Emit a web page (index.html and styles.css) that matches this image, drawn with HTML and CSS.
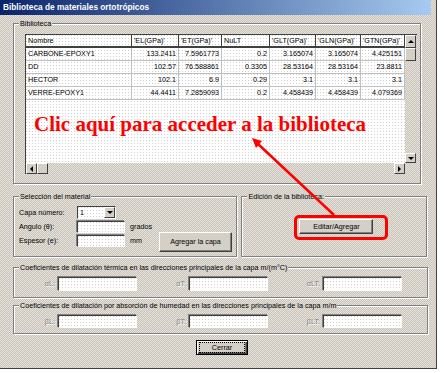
FILE: index.html
```html
<!DOCTYPE html>
<html lang="es">

<head>
  <meta charset="UTF-8">
  <title>Biblioteca de materiales ortotrópicos</title>
  <link rel="stylesheet" href="styles.css">
</head>

<body>
  <div class="window">
    <div class="titlebar">Biblioteca de materiales ortotrópicos</div>
    <div class="client">

      <div class="group lib">
        <span class="group-label">Biblioteca</span>
        <div class="grid">
          <div class="grid-body">
            <div class="grid-row head">
              <div class="cell">Nombre</div>
              <div class="cell">'EL(GPa)'</div>
              <div class="cell">'ET(GPa)'</div>
              <div class="cell">NuLT</div>
              <div class="cell">'GLT(GPa)'</div>
              <div class="cell">'GLN(GPa)'</div>
              <div class="cell">'GTN(GPa)'</div>
            </div>
            <div class="grid-row">
              <div class="cell">CARBONE-EPOXY1</div>
              <div class="cell num">133.2411</div>
              <div class="cell num">7.5961773</div>
              <div class="cell num">0.2</div>
              <div class="cell num">3.165074</div>
              <div class="cell num">3.165074</div>
              <div class="cell num">4.425151</div>
            </div>
            <div class="grid-row">
              <div class="cell">DD</div>
              <div class="cell num">102.57</div>
              <div class="cell num">76.588861</div>
              <div class="cell num">0.3305</div>
              <div class="cell num">28.53164</div>
              <div class="cell num">28.53164</div>
              <div class="cell num">23.8811</div>
            </div>
            <div class="grid-row">
              <div class="cell">HECTOR</div>
              <div class="cell num">102.1</div>
              <div class="cell num">6.9</div>
              <div class="cell num">0.29</div>
              <div class="cell num">3.1</div>
              <div class="cell num">3.1</div>
              <div class="cell num">3.1</div>
            </div>
            <div class="grid-row">
              <div class="cell">VERRE-EPOXY1</div>
              <div class="cell num">44.4411</div>
              <div class="cell num">7.2859093</div>
              <div class="cell num">0.2</div>
              <div class="cell num">4.458439</div>
              <div class="cell num">4.458439</div>
              <div class="cell num">4.079369</div>
            </div>
            <div class="callout">Clic aquí para acceder a la biblioteca</div>
          </div>
          <div class="vscroll">
            <span class="sb-btn sb-up"><i class="tri tri-up"></i></span>
            <span class="sb-btn sb-vthumb"></span>
            <span class="sb-track"></span>
            <span class="sb-btn sb-down"><i class="tri tri-down"></i></span>
          </div>
          <div class="hscroll">
            <span class="sb-btn sb-side"><i class="tri tri-left"></i></span>
            <span class="sb-btn sb-side"></span>
            <span class="sb-track"></span>
            <span class="sb-btn sb-side"><i class="tri tri-right"></i></span>
          </div>
          <div class="corner"></div>
        </div>
      </div>

      <div class="row">
        <div class="group sel">
          <span class="group-label">Selección del material</span>
          <div class="form-row first">
            <span class="fld-label">Capa número:</span>
            <div class="combo">
              <span class="combo-value">1</span>
              <span class="combo-btn"><i class="tri tri-down"></i></span>
            </div>
          </div>
          <div class="form-row">
            <span class="fld-label">Angulo (θ):</span>
            <span class="txt"></span>
            <span class="unit">grados</span>
          </div>
          <div class="form-row">
            <span class="fld-label">Espesor (e):</span>
            <span class="txt"></span>
            <span class="unit">mm</span>
            <button class="btn agregar">Agregar la capa</button>
          </div>
        </div>

        <div class="group edit">
          <span class="group-label">Edición de la biblioteca:</span>
          <div class="highlight">
            <button class="btn editar">Editar/Agregar</button>
          </div>
        </div>
      </div>

      <div class="group coef">
        <span class="group-label">Coeficientes de dilatación térmica en las direcciones principales de la capa m/(m°C)</span>
        <span class="coef-label w1">αL:</span><span class="coef-input"></span>
        <span class="coef-label w2">αT:</span><span class="coef-input"></span>
        <span class="coef-label w3">αLT:</span><span class="coef-input"></span>
      </div>

      <div class="group coef hum">
        <span class="group-label">Coeficientes de dilatación por absorción de humedad en las direcciones principales de la capa m/m</span>
        <span class="coef-label w1">βL:</span><span class="coef-input"></span>
        <span class="coef-label w2">βT:</span><span class="coef-input"></span>
        <span class="coef-label w3">βLT:</span><span class="coef-input"></span>
      </div>

      <div class="footer">
        <button class="btn cerrar"><span class="focus">Cerrar</span></button>
      </div>
    </div>

    <svg class="arrow" width="437" height="369" viewBox="0 0 437 369">
      <line x1="334" y1="215" x2="258" y2="144" stroke="#f00" stroke-width="2.5" />
      <polygon points="252,138 262,141 256,148" fill="#f00" />
    </svg>
  </div>
</body>

</html>
```

FILE: styles.css
```css
body {
  margin: 0;
  background: #fff;
  font-family: "Liberation Sans", Arial, sans-serif;
  font-size: 7.2px;
  color: #000;
}

.window,
.group-label,
.sb-track,
.corner {
  background: repeating-conic-gradient(#c8c4bc 0 25%, #e6e2da 0 50%) 0 0 / 2px 2px fixed;
}

.grid-body,
.txt,
.coef-input,
.combo-value {
  background: conic-gradient(at 1px 1px, #fff 75%, #d0d0d0 0) 0 0 / 3px 3px;
}

.window {
  position: relative;
  width: 437px;
  height: 369px;
  box-sizing: border-box;
  border-right: 1px solid #404040;
  border-bottom: 1px solid #404040;
  padding-right: 5px;
}

.titlebar {
  height: 15px;
  line-height: 15px;
  padding-left: 3px;
  background: linear-gradient(to right, #0a246a, #a6caf0);
  color: #fff;
  font-weight: bold;
  font-size: 8.3px;
}

.client {
  padding: 0 4px 0 13px;
}

/* etched frame */
.group {
  position: relative;
  box-sizing: border-box;
  border: 1px solid #808080;
  box-shadow: 1px 1px 0 #fff, inset 1px 1px 0 #fff;
}

.group-label {
  position: absolute;
  top: -5px;
  left: 5px;
  padding: 0 1px;
  line-height: 9px;
  white-space: nowrap;
}

.lib {
  margin-top: 8px;
  width: 408px;
  height: 161px;
  padding: 10px 0 0 11px;
}

.grid {
  display: grid;
  grid-template-columns: 379px 11px;
  grid-template-rows: 128px 11px;
  width: 391px;
  border-top: 1px solid #404040;
  border-left: 1px solid #404040;
}

.grid-body {
  position: relative;
  overflow: hidden;
}

.grid-row {
  display: grid;
  grid-template-columns: 106px 47px 43px 48px 46px 45px 44px;
}

.cell {
  height: 13px;
  box-sizing: border-box;
  border-right: 1px solid #c0c0c0;
  border-bottom: 1px solid #c0c0c0;
  padding: 0 2px;
  line-height: 12px;
  white-space: nowrap;
  overflow: hidden;
}

.head .cell {
  border-right-color: #404040;
  border-bottom: 2px solid #404040;
  line-height: 11px;
}

.num {
  text-align: right;
}

.callout {
  position: absolute;
  left: 8px;
  top: 79px;
  font: bold 21px/21px "Liberation Serif", "Times New Roman", serif;
  color: #f00;
  white-space: nowrap;
}

/* scrollbars */
.vscroll {
  display: flex;
  flex-direction: column;
}

.hscroll {
  display: flex;
}

.sb-track {
  flex: 1;
}

.sb-btn,
.combo-btn {
  display: flex;
  align-items: center;
  justify-content: center;
  box-sizing: border-box;
  background: #d4d0c8;
  border: 1px solid;
  border-color: #fff #404040 #404040 #fff;
}

.sb-up,
.sb-vthumb {
  height: 13px;
}

.sb-down {
  height: 10px;
}

.sb-side {
  width: 11px;
}

.tri {
  width: 0;
  height: 0;
  border: 3px solid transparent;
}

.tri-up {
  border-top: 0;
  border-bottom-color: #000;
}

.tri-down {
  border-bottom: 0;
  border-top-color: #000;
}

.tri-left {
  border-left: 0;
  border-right-color: #000;
}

.tri-right {
  border-right: 0;
  border-left-color: #000;
}

/* second row */
.row {
  display: flex;
  gap: 4px;
  margin-top: 12px;
}

.sel {
  width: 225px;
  height: 61px;
  padding: 9px 0 0 5px;
}

.edit {
  width: 186px;
  height: 61px;
  padding: 18px 0 0 52px;
}

.form-row {
  display: flex;
  align-items: flex-start;
  margin-top: 2px;
  line-height: 12px;
}

.form-row.first {
  margin-top: 0;
  line-height: 13px;
}

.fld-label {
  width: 58px;
}

.combo {
  display: flex;
  width: 39px;
  height: 13px;
  box-sizing: border-box;
  border: 1px solid;
  border-color: #404040 #fff #fff #404040;
}

.combo-value {
  flex: 1;
  padding-left: 2px;
  line-height: 11px;
}

.combo-btn {
  width: 11px;
}

.txt,
.coef-input {
  box-sizing: border-box;
  border: 1px solid;
  border-color: #404040 #fff #fff #404040;
  box-shadow: -1px -1px 0 #808080;
}

.txt {
  width: 48px;
  height: 12px;
}

.unit {
  width: 29px;
  margin-left: 5px;
}

.btn {
  box-sizing: border-box;
  padding: 0;
  background: #d4d0c8;
  border: 1px solid;
  border-color: #fff #404040 #404040 #fff;
  box-shadow: inset -1px -1px 0 #808080;
  font: inherit;
  color: #000;
}

.agregar {
  width: 73px;
  height: 20px;
  margin-top: -3px;
}

.highlight {
  display: inline-block;
  border: 3px solid #f00;
  border-radius: 5px;
  padding: 1px 12px 3px 2px;
}

.editar {
  display: block;
  width: 74px;
  height: 15px;
}

/* coefficient frames */
.coef {
  display: flex;
  align-items: flex-start;
  margin-top: 10px;
  width: 415px;
  height: 31px;
  padding-top: 9px;
}

.hum {
  margin-top: 7px;
  height: 29px;
}

.coef-label {
  box-sizing: border-box;
  padding-right: 3px;
  text-align: right;
  line-height: 14px;
  color: #808080;
  text-shadow: 1px 1px 0 #fff;
}

.w1 {
  width: 44px;
}

.w2 {
  width: 52px;
}

.w3 {
  width: 55px;
}

.coef-input {
  width: 79px;
  height: 14px;
}

.hum .coef-input {
  height: 13px;
}

.footer {
  margin-top: 6px;
  padding-left: 183px;
}

.cerrar {
  display: block;
  width: 52px;
  height: 15px;
  border: 1px solid #000;
  box-shadow: inset 1px 1px 0 #fff, inset -1px -1px 0 #404040, inset -2px -2px 0 #808080;
  padding: 1px 2px;
}

.focus {
  display: block;
  height: 11px;
  box-sizing: border-box;
  border: 1px dotted #000;
  line-height: 9px;
}

.arrow {
  position: absolute;
  top: 0;
  left: 0;
  pointer-events: none;
}
```
